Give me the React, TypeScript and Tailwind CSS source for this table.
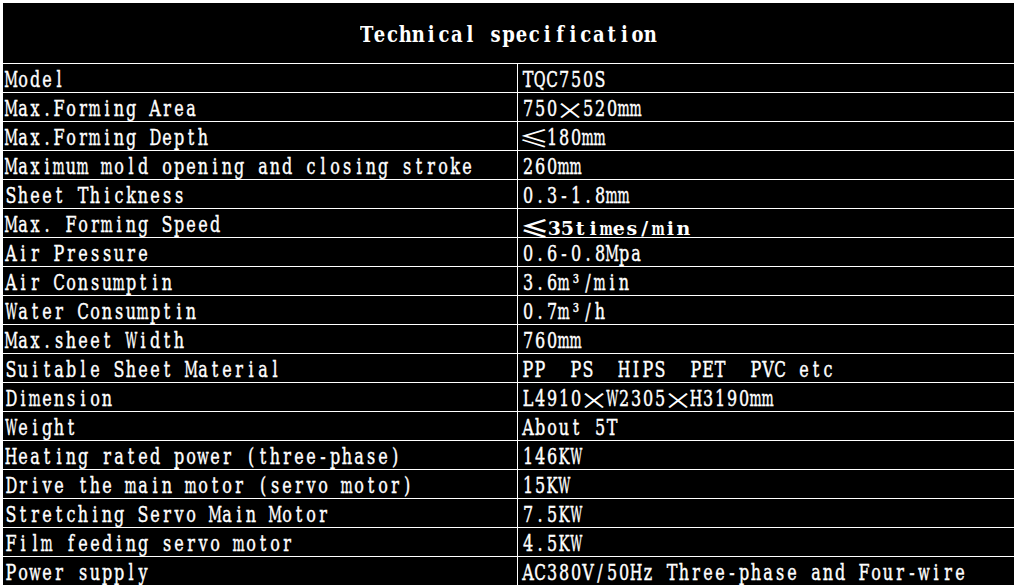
import React from "react";

const ROWS: [string, string][] = [
  ["Model", "TQC750S"],
  ["Max.Forming Area", "750×520mm"],
  ["Max.Forming Depth", "≤180mm"],
  ["Maximum mold opening and closing stroke", "260mm"],
  ["Sheet Thickness", "0.3-1.8mm"],
  ["Max. Forming Speed", "≤35times/min"],
  ["Air Pressure", "0.6-0.8Mpa"],
  ["Air Consumptin", "3.6m³/min"],
  ["Water Consumptin", "0.7m³/h"],
  ["Max.sheet Width", "760mm"],
  ["Suitable Sheet Material", "PP  PS  HIPS  PET  PVC etc"],
  ["Dimension", "L4910×W2305×H3190mm"],
  ["Weight", "About 5T"],
  ["Heating rated power (three-phase)", "146KW"],
  ["Drive the main motor (servo motor)", "15KW"],
  ["Stretching Servo Main Motor", "7.5KW"],
  ["Film feeding servo motor", "4.5KW"],
  ["Power supply", "AC380V/50Hz Three-phase and Four-wire"],
];

// the sheet font puts every latin glyph in a half-width cell, wide ones get squeezed
const SQUEEZE: Record<string, string> = {
  m: "inline-block scale-x-[0.8]",
  M: "inline-block scale-x-[0.84]",
  W: "inline-block scale-x-[0.73]",
  w: "inline-block scale-x-[0.86]",
  H: "inline-block scale-x-[0.9]",
  N: "inline-block scale-x-[0.9]",
  K: "inline-block scale-x-[0.92]",
  Q: "inline-block scale-x-[0.9]",
  O: "inline-block scale-x-[0.92]",
  D: "inline-block scale-x-[0.92]",
  C: "inline-block scale-x-[0.95]",
};

const BOLD_SQUEEZE: Record<string, string> = {
  m: "inline-block scale-x-[0.66]",
};

function Cells({ text, bold = false }: { text: string; bold?: boolean }) {
  return (
    <>
      {Array.from(text).map((ch, i) => {
        if (ch === "×") {
          return (
            <span key={i} className="inline-flex w-[24px] justify-center font-['Noto_Sans_CJK_SC',sans-serif] [-webkit-text-stroke:0px]">
              <span className="inline-block text-[24px] scale-x-[1.25] scale-y-[0.68] translate-y-[5.5px]">×</span>
            </span>
          );
        }
        if (ch === "≤") {
          return bold ? (
            <span key={i} className="inline-flex w-[26px] justify-center font-['Noto_Sans_CJK_SC',sans-serif] font-bold">
              <span className="inline-block text-[24px] scale-x-[1.2] scale-y-[1.0] translate-y-[2px]">≤</span>
            </span>
          ) : (
            <span key={i} className="inline-flex w-[24px] justify-center font-['Noto_Sans_CJK_SC',sans-serif] [-webkit-text-stroke:0px]">
              <span className="inline-block text-[24px] scale-x-[1.25] scale-y-[0.66] translate-y-[5px]">≤</span>
            </span>
          );
        }
        const sq = bold ? BOLD_SQUEEZE[ch] : SQUEEZE[ch];
        return (
          <span key={i} className={bold ? "inline-flex w-[12.9px] justify-center" : "inline-flex w-[12px] justify-center"}>
            <span className={sq}>{ch === " " ? "\u00a0" : ch}</span>
          </span>
        );
      })}
    </>
  );
}

export default function App() {
  return (
    <div className="w-[1016px] h-[587px] bg-white overflow-hidden font-['DejaVu_Serif',serif] text-white">
      <div className="ml-[2px] mt-[2px] w-[1012px] bg-black border-l border-b border-white flex flex-col">
        {/* title */}
        <div className="h-[61px] border-t border-white flex justify-center items-start pt-[25px]">
          <span className="inline-block origin-bottom scale-y-[1.2] text-[18px] leading-[16px] font-bold whitespace-nowrap">
            <Cells text="Technical specification" bold />
          </span>
        </div>

        {ROWS.map(([label, value], i) => {
          const bold = label === "Max. Forming Speed";
          return (
            <div key={i} className="h-[29px] border-t border-white flex">
              <div className="w-[514px] shrink-0 flex items-end pl-[2px] pb-px">
                <span className="inline-block origin-bottom scale-y-[1.42] text-[16px] leading-[16px] whitespace-nowrap [-webkit-text-stroke:0.3px_white]">
                  <Cells text={label} />
                </span>
              </div>
              <div className="flex-1 border-l border-white flex items-end pl-[4px] pb-px">
                {bold ? (
                  <span className="inline-block origin-bottom scale-y-[0.95] text-[19px] leading-[16px] font-bold whitespace-nowrap">
                    <Cells text={value} bold />
                  </span>
                ) : (
                  <span className="inline-block origin-bottom scale-y-[1.42] text-[16px] leading-[16px] whitespace-nowrap [-webkit-text-stroke:0.3px_white]">
                    <Cells text={value} />
                  </span>
                )}
              </div>
            </div>
          );
        })}
      </div>
    </div>
  );
}
